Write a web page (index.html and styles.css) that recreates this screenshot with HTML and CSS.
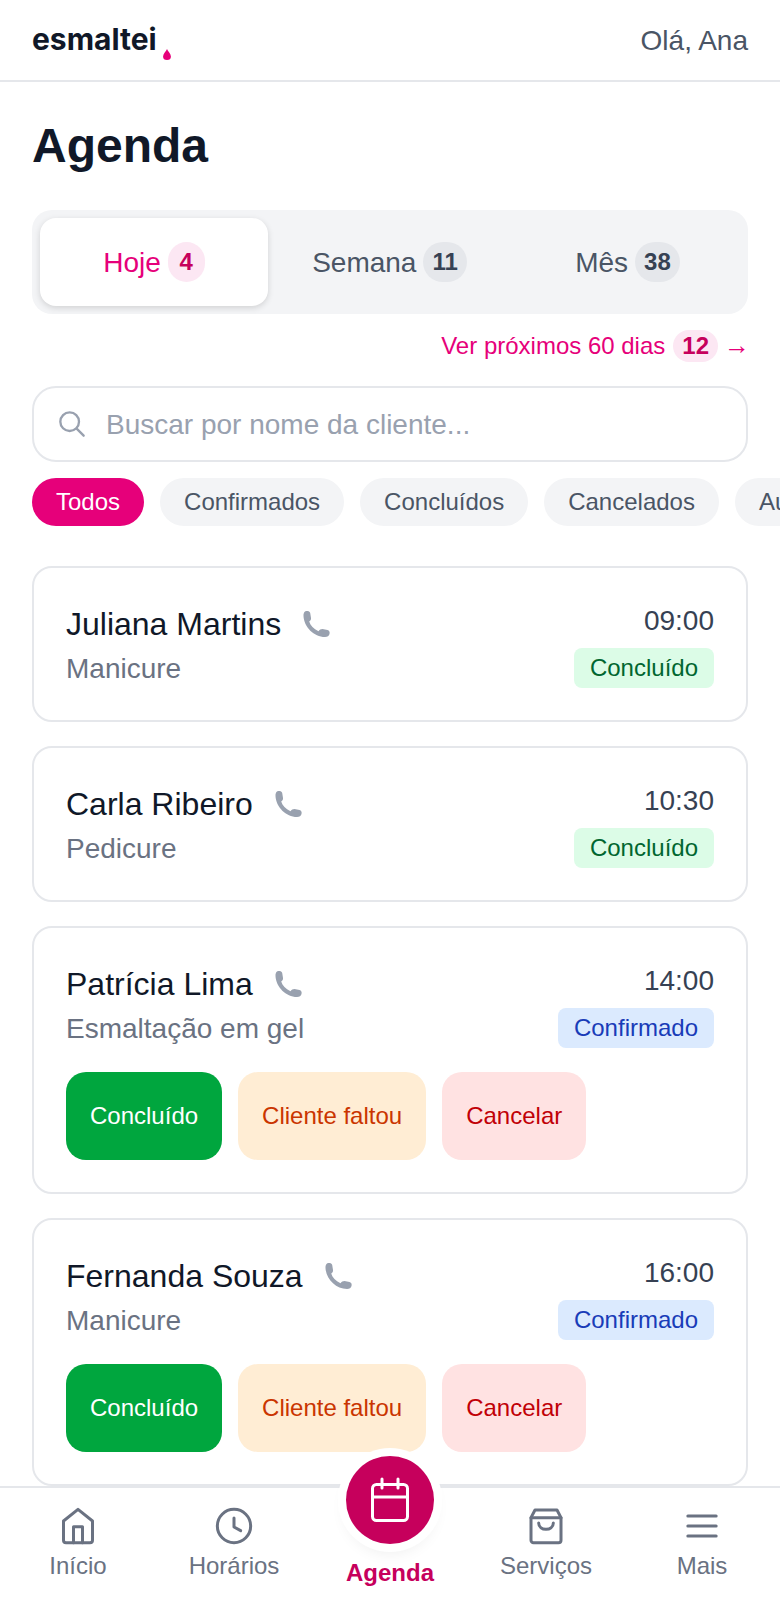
FILE: index.html
```html
<!DOCTYPE html>
<html lang="pt-BR">
<head>
    <meta charset="UTF-8">
    <title>Agenda - esmaltei</title>
    <meta name="viewport" content="width=device-width, initial-scale=1">
    <link rel="stylesheet" href="styles.css">
</head>
<body>
    <header class="top-bar">
        <div class="logo">esmaltei<svg class="logo-drop" viewBox="0 0 10 14"><path d="M5 0C6 3 10 6 10 9.5A5 4.5 0 0 1 0 9.5C0 6 4 3 5 0Z"/></svg></div>
        <div class="greeting">Olá, Ana</div>
    </header>

    <main class="page">
        <h1>Agenda</h1>

        <div class="tabs">
            <button type="button" class="tab active"><span class="tab-label">Hoje</span> <span class="count">4</span></button>
            <button type="button" class="tab"><span class="tab-label">Semana</span> <span class="count">11</span></button>
            <button type="button" class="tab"><span class="tab-label">Mês</span> <span class="count">38</span></button>
        </div>

        <div class="next-days">
            <a href="#">Ver próximos 60 dias</a>
            <span class="count">12</span>
            <a href="#" class="arrow">→</a>
        </div>

        <div class="search">
            <svg class="search-icon" viewBox="0 0 24 24"><circle cx="10" cy="10" r="8"/><path d="M16 16l6 6"/></svg>
            <span class="placeholder">Buscar por nome da cliente...</span>
        </div>

        <div class="filters">
            <button type="button" class="pill active">Todos</button>
            <button type="button" class="pill">Confirmados</button>
            <button type="button" class="pill">Concluídos</button>
            <button type="button" class="pill">Cancelados</button>
            <button type="button" class="pill">Ausentes</button>
        </div>

        <section class="cards">
            <article class="card">
                <div class="card-top">
                    <div>
                        <div class="client">Juliana Martins <svg class="phone" viewBox="0 0 28 28"><use href="#phone-shape"/></svg></div>
                        <div class="service">Manicure</div>
                    </div>
                    <div class="card-side">
                        <div class="time">09:00</div>
                        <span class="status done">Concluído</span>
                    </div>
                </div>
            </article>

            <article class="card">
                <div class="card-top">
                    <div>
                        <div class="client">Carla Ribeiro <svg class="phone" viewBox="0 0 28 28"><use href="#phone-shape"/></svg></div>
                        <div class="service">Pedicure</div>
                    </div>
                    <div class="card-side">
                        <div class="time">10:30</div>
                        <span class="status done">Concluído</span>
                    </div>
                </div>
            </article>

            <article class="card">
                <div class="card-top">
                    <div>
                        <div class="client">Patrícia Lima <svg class="phone" viewBox="0 0 28 28"><use href="#phone-shape"/></svg></div>
                        <div class="service">Esmaltação em gel</div>
                    </div>
                    <div class="card-side">
                        <div class="time">14:00</div>
                        <span class="status confirmed">Confirmado</span>
                    </div>
                </div>
                <div class="actions">
                    <button type="button" class="btn btn-done">Concluído</button>
                    <button type="button" class="btn btn-missed">Cliente faltou</button>
                    <button type="button" class="btn btn-cancel">Cancelar</button>
                </div>
            </article>

            <article class="card">
                <div class="card-top">
                    <div>
                        <div class="client">Fernanda Souza <svg class="phone" viewBox="0 0 28 28"><use href="#phone-shape"/></svg></div>
                        <div class="service">Manicure</div>
                    </div>
                    <div class="card-side">
                        <div class="time">16:00</div>
                        <span class="status confirmed">Confirmado</span>
                    </div>
                </div>
                <div class="actions">
                    <button type="button" class="btn btn-done">Concluído</button>
                    <button type="button" class="btn btn-missed">Cliente faltou</button>
                    <button type="button" class="btn btn-cancel">Cancelar</button>
                </div>
            </article>
        </section>
    </main>

    <nav class="bottom-nav">
        <a href="#" class="nav-item">
            <svg viewBox="0 0 24 24"><path d="M12 2L20.7 9V20.5A1.5 1.5 0 0 1 19.2 22H4.8A1.5 1.5 0 0 1 3.3 20.5V9Z"/><path d="M9.3 22V12.5H14.7V22"/></svg>
            <span>Início</span>
        </a>
        <a href="#" class="nav-item">
            <svg viewBox="0 0 24 24"><circle cx="12" cy="12" r="10"/><path d="M12 7.2V12.6L16 14.8"/></svg>
            <span>Horários</span>
        </a>
        <a href="#" class="nav-item nav-main">
            <span class="nav-circle">
                <svg viewBox="0 0 24 24"><rect x="3.25" y="4.25" width="17.5" height="18" rx="2"/><path d="M8 1.5V6M16 1.5V6M3.25 10.5H20.75"/></svg>
            </span>
            <span>Agenda</span>
        </a>
        <a href="#" class="nav-item">
            <svg viewBox="0 0 24 24"><path d="M5.4 2.4H18.6L21 7V20.5A1.5 1.5 0 0 1 19.5 22H4.5A1.5 1.5 0 0 1 3 20.5V7Z"/><path d="M3 7H21"/><path d="M7.6 10.2C7.6 15.2 16.4 15.2 16.4 10.2"/></svg>
            <span>Serviços</span>
        </a>
        <a href="#" class="nav-item">
            <svg viewBox="0 0 24 24"><path d="M3.5 6H20.5M3.5 12H20.5M3.5 18H20.5"/></svg>
            <span>Mais</span>
        </a>
    </nav>

    <svg class="defs" width="0" height="0">
        <symbol id="phone-shape" viewBox="0 0 28 28">
            <path d="M2 1.5C4 .5 6.5 1 7.2 3L8 8C8.2 9.5 7.5 10.8 6.2 11.5 7.5 15.5 10.5 19 15.5 21.2 16.5 19.8 17.8 19 19.5 19L24.5 20C26.3 20.5 27 22 26.5 24 26 26 24.5 27 22 27 11 27 1 17 .5 6 .4 4 .8 2.5 2 1.5Z"/>
        </symbol>
    </svg>
</body>
</html>
```

FILE: styles.css
```css
* { box-sizing: border-box; }
html, body { height: 100%; }
body {
    margin: 0;
    height: 1600px;
    overflow: hidden;
    background: #fff;
    color: #101828;
    font-family: "Liberation Sans", Arial, sans-serif;
}
a { color: inherit; text-decoration: none; }
button { font-family: inherit; border: none; cursor: pointer; }
.defs { position: absolute; }

/* header */
.top-bar {
    height: 82px;
    padding: 0 32px;
    display: flex;
    align-items: center;
    justify-content: space-between;
    border-bottom: 2px solid #e5e7eb;
}
.logo {
    display: flex;
    align-items: flex-end;
    font-family: Inter, sans-serif;
    font-size: 30px;
    font-weight: 700;
    line-height: 36px;
    margin-top: -2px;
}
.logo-drop {
    width: 8px;
    height: 11px;
    margin: 0 0 -3px 6px;
    fill: #e6007a;
}
.greeting { font-size: 28px; color: #4a5565; margin-top: 2px; }

/* page */
.page { padding: 32px 32px 0; }
h1 {
    margin: 0 0 32px;
    font-size: 48px;
    line-height: 64px;
    font-weight: 700;
}

.tabs {
    display: grid;
    grid-template-columns: 228px 243px 233px;
    height: 104px;
    padding: 8px;
    background: #f3f4f6;
    border-radius: 20px;
}
.tab {
    display: flex;
    align-items: center;
    justify-content: center;
    gap: 7px;
    background: none;
    border-radius: 16px;
    font-size: 28px;
    color: #4a5565;
}
.tab-label { margin-top: 2px; }
.tab.active {
    background: #fff;
    color: #e6007a;
    box-shadow: 0 2px 6px rgba(0,0,0,0.14);
}
.count {
    display: inline-flex;
    align-items: center;
    justify-content: center;
    min-width: 37px;
    height: 40px;
    padding: 0 9px;
    border-radius: 20px;
    background: #e5e7eb;
    color: #364153;
    font-size: 24px;
    font-weight: 700;
}
.tab.active .count, .next-days .count {
    background: #fce7f3;
    color: #c6005c;
}

.next-days {
    display: flex;
    justify-content: flex-end;
    align-items: center;
    gap: 8px;
    margin-top: 12px;
    height: 40px;
    font-size: 24px;
    color: #e6007a;
}
.next-days .count { height: 32px; border-radius: 16px; }
.arrow { margin: 0 -2px 1px -2px; font-size: 26px; }

.search {
    display: flex;
    align-items: center;
    gap: 20px;
    height: 76px;
    margin-top: 20px;
    padding: 0 24px;
    border: 2px solid #e5e7eb;
    border-radius: 24px;
}
.search-icon {
    width: 28px;
    height: 28px;
    fill: none;
    stroke: #99a1af;
    stroke-width: 2;
    stroke-linecap: round;
}
.placeholder { font-size: 28px; color: #99a1af; margin-top: 2px; }

.filters {
    display: flex;
    gap: 16px;
    margin: 16px -32px 0 0;
    overflow: hidden;
}
.pill {
    flex: none;
    height: 48px;
    padding: 0 24px;
    border-radius: 24px;
    background: #f3f4f6;
    color: #4a5565;
    font-size: 24px;
}
.pill.active { background: #e6007a; color: #fff; }

/* cards */
.cards {
    display: flex;
    flex-direction: column;
    gap: 24px;
    margin-top: 40px;
}
.card {
    padding: 32px;
    border: 2px solid #e5e7eb;
    border-radius: 20px;
    background: #fff;
}
.card-top {
    display: flex;
    justify-content: space-between;
}
.client {
    display: flex;
    align-items: center;
    height: 48px;
    font-size: 32px;
}
.phone {
    width: 28px;
    height: 28px;
    margin-left: 22px;
    fill: #99a1af;
}
.service {
    margin-top: 3px;
    font-size: 28px;
    line-height: 36px;
    color: #6a7282;
}
.card-side {
    display: flex;
    flex-direction: column;
    align-items: flex-end;
}
.time {
    padding-top: 3px;
    font-size: 28px;
    line-height: 36px;
    color: #364153;
}
.status {
    margin-top: 9px;
    height: 40px;
    line-height: 40px;
    padding: 0 16px;
    border-radius: 8px;
    font-size: 24px;
}
.status.done { background: #dcfce7; color: #016630; }
.status.confirmed { background: #dbeafe; color: #193cb8; }

.actions {
    display: flex;
    gap: 16px;
    margin-top: 24px;
}
.btn {
    height: 88px;
    padding: 0 24px;
    border-radius: 20px;
    font-size: 24px;
}
.btn-done { background: #00a63e; color: #fff; }
.btn-missed { background: #ffedd4; color: #ca3500; }
.btn-cancel { background: #ffe2e2; color: #c10007; }

/* bottom nav */
.bottom-nav {
    position: fixed;
    left: 0;
    right: 0;
    bottom: 0;
    height: 114px;
    display: grid;
    grid-template-columns: repeat(5, 1fr);
    background: #fff;
    border-top: 2px solid #e5e7eb;
}
.nav-item {
    position: relative;
    display: flex;
    flex-direction: column;
    align-items: center;
    padding-top: 18px;
    font-size: 24px;
    line-height: 28px;
    color: #6a7282;
}
.nav-item svg {
    width: 40px;
    height: 40px;
    margin-bottom: 6px;
    fill: none;
    stroke: currentColor;
    stroke-width: 1.8;
    stroke-linecap: round;
    stroke-linejoin: round;
}
.nav-main {
    padding-top: 71px;
    font-weight: 700;
    color: #c6005c;
}
.nav-circle {
    position: absolute;
    top: -32px;
    left: 50%;
    margin-left: -44px;
    width: 88px;
    height: 88px;
    display: flex;
    align-items: center;
    justify-content: center;
    border-radius: 50%;
    background: #c6005c;
    box-shadow: 0 0 0 8px #fff, 0 8px 16px rgba(0,0,0,0.08);
}
.nav-item .nav-circle svg {
    width: 48px;
    height: 48px;
    margin: 0;
    color: #fff;
    stroke-width: 1.5;
}
```
